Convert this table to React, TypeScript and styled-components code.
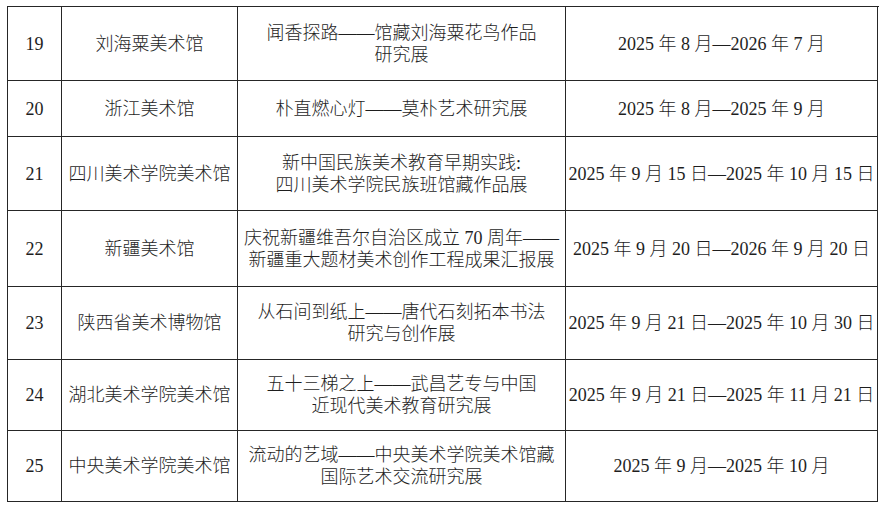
import React from "react";
import styled, { createGlobalStyle } from "styled-components";

const GlobalStyle = createGlobalStyle`
  html, body {
    margin: 0;
    padding: 0;
    background: #ffffff;
  }
  body {
    font-family: "Liberation Serif", "Noto Sans CJK SC", serif;
    color: #1e1e1e;
  }
`;

const Page = styled.div`
  width: 884px;
  height: 507px;
  padding: 6px 0 0 7px;
  box-sizing: border-box;
  background: #ffffff;
`;

const Table = styled.div`
  display: grid;
  grid-template-columns: 54px 176px 328px 312px;
  grid-template-rows: 74px 56px 74px 76px 73px 71px 71px;
  width: 871px;
  border-left: 1px solid #262626;
  border-top: 1px solid #262626;
`;

const Cell = styled.div<{ $wide?: boolean }>`
  box-sizing: border-box;
  border-right: 1px solid #262626;
  border-bottom: 1px solid #262626;
  display: flex;
  flex-direction: column;
  align-items: center;
  justify-content: center;
  text-align: center;
  font-family: "Liberation Serif", "Noto Sans CJK SC", serif;
  font-size: 18px;
  font-weight: 300;
  line-height: 22px;
  color: #1e1e1e;
  white-space: nowrap;
  padding: 0 ${(p) => (p.$wide ? 2 : 4)}px;
`;

const Line = styled.span`
  display: block;
`;

type Row = {
  no: string;
  name: string;
  title: string[];
  date: string;
};

const rows: Row[] = [
  {
    no: "19",
    name: "刘海粟美术馆",
    title: ["闻香探路——馆藏刘海粟花鸟作品", "研究展"],
    date: "2025 年 8 月—2026 年 7 月",
  },
  {
    no: "20",
    name: "浙江美术馆",
    title: ["朴直燃心灯——莫朴艺术研究展"],
    date: "2025 年 8 月—2025 年 9 月",
  },
  {
    no: "21",
    name: "四川美术学院美术馆",
    title: ["新中国民族美术教育早期实践:", "四川美术学院民族班馆藏作品展"],
    date: "2025 年 9 月 15 日—2025 年 10 月 15 日",
  },
  {
    no: "22",
    name: "新疆美术馆",
    title: ["庆祝新疆维吾尔自治区成立 70 周年——", "新疆重大题材美术创作工程成果汇报展"],
    date: "2025 年 9 月 20 日—2026 年 9 月 20 日",
  },
  {
    no: "23",
    name: "陕西省美术博物馆",
    title: ["从石间到纸上——唐代石刻拓本书法", "研究与创作展"],
    date: "2025 年 9 月 21 日—2025 年 10 月 30 日",
  },
  {
    no: "24",
    name: "湖北美术学院美术馆",
    title: ["五十三梯之上——武昌艺专与中国", "近现代美术教育研究展"],
    date: "2025 年 9 月 21 日—2025 年 11 月 21 日",
  },
  {
    no: "25",
    name: "中央美术学院美术馆",
    title: ["流动的艺域——中央美术学院美术馆藏", "国际艺术交流研究展"],
    date: "2025 年 9 月—2025 年 10 月",
  },
];

export default function App() {
  return (
    <>
      <GlobalStyle />
      <Page>
        <Table>
          {rows.map((r) => (
            <React.Fragment key={r.no}>
              <Cell>{r.no}</Cell>
              <Cell>{r.name}</Cell>
              <Cell $wide>
                {r.title.map((t) => (
                  <Line key={t}>{t}</Line>
                ))}
              </Cell>
              <Cell $wide>{r.date}</Cell>
            </React.Fragment>
          ))}
        </Table>
      </Page>
    </>
  );
}
